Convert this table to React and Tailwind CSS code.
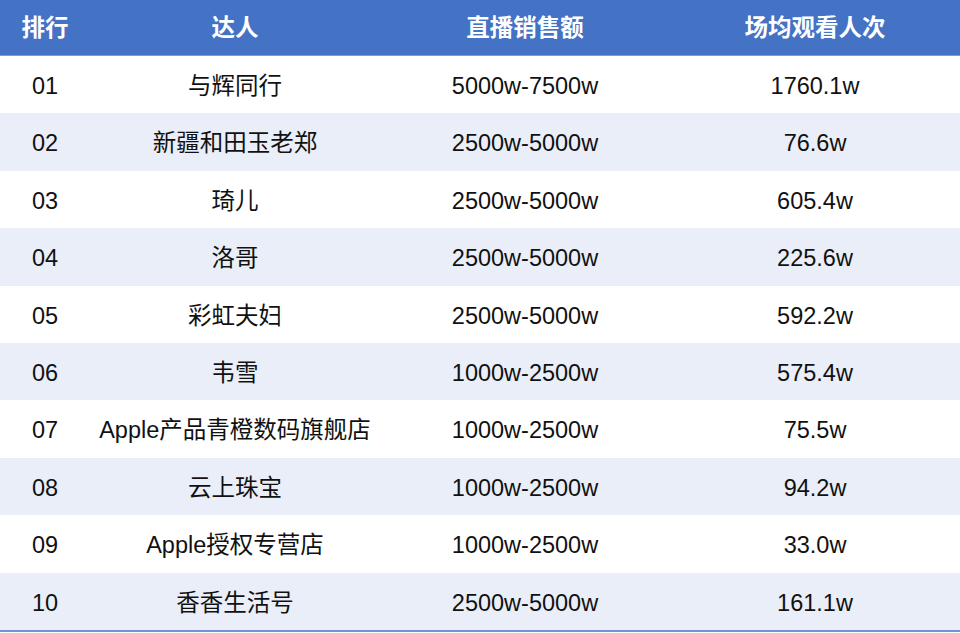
const rows = [
  ["01", "与辉同行", "5000w-7500w", "1760.1w"],
  ["02", "新疆和田玉老郑", "2500w-5000w", "76.6w"],
  ["03", "琦儿", "2500w-5000w", "605.4w"],
  ["04", "洛哥", "2500w-5000w", "225.6w"],
  ["05", "彩虹夫妇", "2500w-5000w", "592.2w"],
  ["06", "韦雪", "1000w-2500w", "575.4w"],
  ["07", "Apple产品青橙数码旗舰店", "1000w-2500w", "75.5w"],
  ["08", "云上珠宝", "1000w-2500w", "94.2w"],
  ["09", "Apple授权专营店", "1000w-2500w", "33.0w"],
  ["10", "香香生活号", "2500w-5000w", "161.1w"],
];

export default function App() {
  return (
    <div
      className="w-[960px] h-[633px] bg-white overflow-hidden"
      style={{ fontFamily: '"Liberation Sans", Arial, "Noto Sans CJK SC", sans-serif' }}
    >
      <div className="grid grid-cols-[90px_290px_290px_290px] h-[56px] pt-[3px] bg-[#4472c4] border-b border-[#7b9ddb] text-white font-bold text-[23.5px]">
        <div className="flex items-center justify-center">排行</div>
        <div className="flex items-center justify-center">达人</div>
        <div className="flex items-center justify-center">直播销售额</div>
        <div className="flex items-center justify-center">场均观看人次</div>
      </div>
      <div className="flex flex-col border-b-2 border-[#6f93d6]">
        {rows.map((r, i) => (
          <div
            key={r[0]}
            className={
              "grid grid-cols-[90px_290px_290px_290px] h-[57.4px] pt-[4px] text-[23.5px] text-[#111111] " +
              (i % 2 === 1 ? "bg-[#e9eef8]" : "bg-white")
            }
          >
            <div className="flex items-center justify-center">{r[0]}</div>
            <div className="flex items-center justify-center whitespace-nowrap">{r[1]}</div>
            <div className="flex items-center justify-center">{r[2]}</div>
            <div className="flex items-center justify-center">{r[3]}</div>
          </div>
        ))}
      </div>
    </div>
  );
}
